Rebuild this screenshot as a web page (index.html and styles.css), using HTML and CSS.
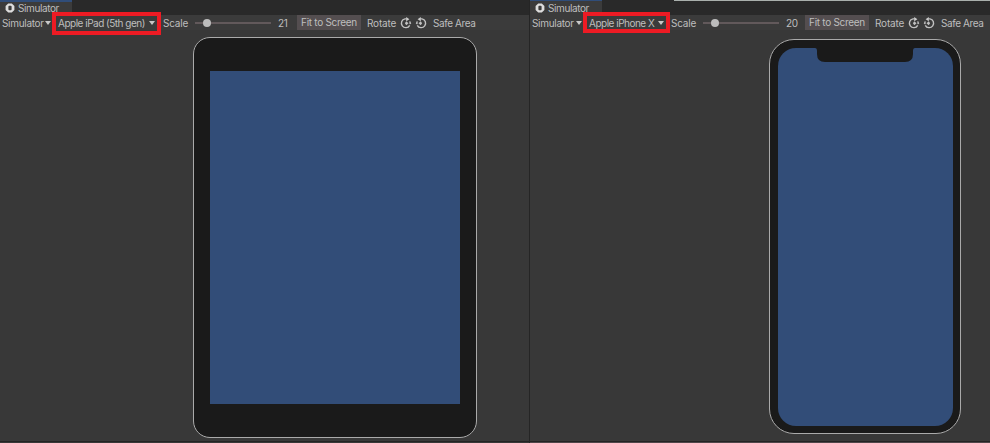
FILE: index.html
```html
<!DOCTYPE html>
<html lang="en">
<head>
<meta charset="utf-8">
<title>Simulator</title>
<link rel="stylesheet" href="styles.css">
</head>
<body>
<svg class="defs" width="0" height="0">
  <symbol id="gear" viewBox="0 0 10 10"><path d="M3.2.4h3.6l2.6 2.7v3.8L6.8 9.6H3.2L.6 6.9V3.1z" fill="#ddd"/><rect x="3.4" y="2.7" width="3.2" height="4.6" rx="1" fill="#3b3b3b"/></symbol>
  <symbol id="rotate" viewBox="0 0 12 12"><path d="M6.6 1.9H5A4.4 4.4 0 1 0 9.7 8.3" fill="none" stroke="#c2c2c2" stroke-width="1.4"/><path d="M6.2 0l3.2 2.2-3.2 2z" fill="#ccc"/><path d="M6.3 4.2l2.2 2-2.2 2-1.4-2z" fill="#c2c2c2"/><path d="M9.2 4.2l1.5.4.5 2.4-1.8.2z" fill="#b5b5b5"/></symbol>
</svg>
<main class="workspace">
  <section class="panel">
    <header class="tabs"><div class="tab"><svg class="gear"><use href="#gear"/></svg><span>Simulator</span></div></header>
    <nav class="toolbar">
      <span class="menu">Simulator<i class="arrow"></i></span>
      <span class="device-menu">Apple iPad (5th gen)<i class="arrow"></i></span>
      <span class="label">Scale</span>
      <span class="slider"><i class="knob"></i></span>
      <span class="value">21</span>
      <span class="fit">Fit to Screen</span>
      <span class="rotate">Rotate</span>
      <svg class="icon"><use href="#rotate"/></svg>
      <svg class="icon flip"><use href="#rotate"/></svg>
      <span class="safe">Safe Area</span>
    </nav>
    <div class="view"><div class="ipad"><div class="screen"></div></div></div>
  </section>
  <section class="panel right">
    <header class="tabs"><div class="tab"><svg class="gear"><use href="#gear"/></svg><span>Simulator</span></div></header>
    <nav class="toolbar">
      <span class="menu">Simulator<i class="arrow"></i></span>
      <span class="device-menu">Apple iPhone X<i class="arrow"></i></span>
      <span class="label">Scale</span>
      <span class="slider"><i class="knob"></i></span>
      <span class="value">20</span>
      <span class="fit">Fit to Screen</span>
      <span class="rotate">Rotate</span>
      <svg class="icon"><use href="#rotate"/></svg>
      <svg class="icon flip"><use href="#rotate"/></svg>
      <span class="safe">Safe Area</span>
    </nav>
    <div class="view"><div class="iphone"><div class="screen"><svg class="notch" viewBox="0 0 100 14"><path d="M0 0h100q-2 0-2 3v3q0 8-8 8H10Q2 14 2 6V3Q2 0 0 0z" fill="#1a1a1a"/></svg></div></div></div>
  </section>
</main>
</body>
</html>
```
FILE: styles.css
```css
* { box-sizing: border-box; }
body {
  margin: 0;
  background: #383838;
  color: #bebebe;
  font: 10px/14px Inter, "Liberation Sans", sans-serif;
}
.defs { position: absolute; }
.workspace {
  display: grid;
  grid-template-columns: 530px 460px;
  height: 443px;
  overflow: hidden;
}
.panel {
  display: grid;
  grid-template-rows: 15px 15px 411px 2px;
  border-right: 1px solid #252525;
  white-space: nowrap;
}
.panel.right { border-right: 0; }
.panel::after { content: ""; border-top: 1px solid #242424; }
.right::after { border-bottom: 1px solid #504749; }
.tabs { background: #292929; }
.right .tabs {
  background: linear-gradient(#a9afac, #a9afac) 144px 0 / 316px 1px no-repeat #292929;
}
.tab {
  display: flex;
  align-items: center;
  gap: 3px;
  width: 72px;
  height: 15px;
  padding: 0 0 1px 5px;
  background: #3b3b3b;
  border-top: 2px solid #304d79;
  letter-spacing: -.4px;
}
.right .tab { border-top-width: 1px; padding: 1px 0 1px 5px; }
.gear { width: 10px; height: 10px; }
.toolbar {
  display: grid;
  grid-template-columns: 52px 109px 34px 76px 26px 64px 37px 15px 15px 1fr;
  align-items: center;
  height: 15px;
  background: #3b3b3b;
}
.right .toolbar { grid-template-columns: 53px 87px 33px 76px 26px 64px 37px 15px 15px 1fr; }
.menu, .device-menu { display: flex; align-items: center; justify-content: space-between; }
.menu { padding: 0 1px 0 2px; letter-spacing: -.3px; }
.arrow {
  border: 3px solid transparent;
  border-top: 4px solid #c8c8c8;
  border-bottom: 0;
}
.device-menu { position: relative; padding: 0 6px; letter-spacing: -.5px; }
.device-menu::after {
  content: "";
  position: absolute;
  inset: -4px 0 -5px;
  border: 4px solid #ed1b24;
}
.right .device-menu::after { inset: -4px 0 -3px; }
.label { padding-left: 2px; letter-spacing: -.2px; }
.right .label { padding-left: 1px; }
.slider { position: relative; height: 2px; background: #62595b; }
.knob {
  position: absolute;
  left: 8px;
  top: -3px;
  width: 8px;
  height: 8px;
  border-radius: 50%;
  background: #bdbdbd;
}
.value { padding-left: 7px; letter-spacing: -.3px; }
.fit { height: 15px; background: #544e50; text-align: center; letter-spacing: -.3px; }
.rotate { padding-left: 6px; letter-spacing: -.2px; }
.icon { width: 12px; height: 12px; justify-self: center; }
.flip { transform: scaleX(-1); }
.safe { padding-left: 5px; letter-spacing: -.4px; }
.ipad {
  width: 284px;
  height: 401px;
  margin: 7px 0 0 193px;
  padding: 33px 15px 0;
  border: 1px solid #aaa;
  border-radius: 17px;
  background: #1a1a1a;
}
.ipad .screen { width: 250px; height: 333px; margin-left: 1px; background: #324d78; }
.iphone {
  width: 192px;
  height: 395px;
  margin: 9px 0 0 239px;
  padding: 8px;
  border: 1px solid #aaa;
  border-radius: 25px;
  background: #1a1a1a;
}
.iphone .screen { height: 378px; width: 175px; border-radius: 18px; background: #324d78; }
.notch { display: block; width: 100px; height: 14px; margin: 0 0 0 37px; }
```
